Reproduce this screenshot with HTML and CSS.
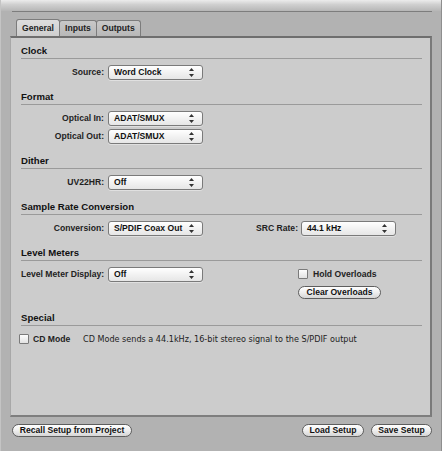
FILE: index.html
```html
<!DOCTYPE html>
<html>
<head>
<meta charset="utf-8">
<link rel="stylesheet" href="styles.css">
</head>
<body>
<div class="window">
  <div class="topbar"></div>
  <div class="rule"></div>
  <div class="tabs">
    <div class="tab active">General</div>
    <div class="tab">Inputs</div>
    <div class="tab">Outputs</div>
  </div>
  <div class="panel">
    <div class="section">
      <div class="head">Clock</div>
      <div class="row"><span class="label">Source:</span><span class="popup">Word Clock<svg class="arr" width="5" height="9" viewBox="0 0 5 9"><path d="M2.5 0L5 3H0z M2.5 9L5 6H0z"/></svg></span></div>
    </div>
    <div class="section">
      <div class="head">Format</div>
      <div class="row"><span class="label">Optical In:</span><span class="popup">ADAT/SMUX<svg class="arr" width="5" height="9" viewBox="0 0 5 9"><path d="M2.5 0L5 3H0z M2.5 9L5 6H0z"/></svg></span></div>
      <div class="row"><span class="label">Optical Out:</span><span class="popup">ADAT/SMUX<svg class="arr" width="5" height="9" viewBox="0 0 5 9"><path d="M2.5 0L5 3H0z M2.5 9L5 6H0z"/></svg></span></div>
    </div>
    <div class="section">
      <div class="head">Dither</div>
      <div class="row"><span class="label">UV22HR:</span><span class="popup">Off<svg class="arr" width="5" height="9" viewBox="0 0 5 9"><path d="M2.5 0L5 3H0z M2.5 9L5 6H0z"/></svg></span></div>
    </div>
    <div class="section">
      <div class="head">Sample Rate Conversion</div>
      <div class="row">
        <span class="label">Conversion:</span><span class="popup">S/PDIF Coax Out<svg class="arr" width="5" height="9" viewBox="0 0 5 9"><path d="M2.5 0L5 3H0z M2.5 9L5 6H0z"/></svg></span>
        <span class="label2">SRC Rate:</span><span class="popup">44.1 kHz<svg class="arr" width="5" height="9" viewBox="0 0 5 9"><path d="M2.5 0L5 3H0z M2.5 9L5 6H0z"/></svg></span>
      </div>
    </div>
    <div class="section">
      <div class="head">Level Meters</div>
      <div class="row">
        <span class="label">Level Meter Display:</span><span class="popup">Off<svg class="arr" width="5" height="9" viewBox="0 0 5 9"><path d="M2.5 0L5 3H0z M2.5 9L5 6H0z"/></svg></span>
        <span class="right"><span class="check"></span><span class="clabel">Hold Overloads</span></span>
      </div>
      <div class="row tall"><span class="right"><span class="pill">Clear Overloads</span></span></div>
    </div>
    <div class="section">
      <div class="head">Special</div>
      <div class="row cd">
        <span class="check"></span><span class="clabel">CD Mode</span>
        <span class="desc">CD Mode sends a 44.1kHz, 16-bit stereo signal to the S/PDIF output</span>
      </div>
    </div>
  </div>
  <div class="footer">
    <span class="pill recall">Recall Setup from Project</span>
    <span class="spacer"></span>
    <span class="pill load">Load Setup</span>
    <span class="pill save">Save Setup</span>
  </div>
</div>
</body>
</html>
```
FILE: styles.css
```css
html, body { margin: 0; padding: 0; }
body { font-family: "Liberation Sans", Arial, sans-serif; color: #1a1a1a; }
.window {
  width: 442px; height: 451px; background: #b2b2b2;
  border-right: 1px solid #8e8e8e; position: relative; box-sizing: border-box;
  border-left: 1px solid #c4c4c4;
}
.topbar { height: 11px; background: linear-gradient(#ececec, #d0d0d0 40%, #b6b6b6); }
.rule { height: 1px; background: #7d7d7d; margin: 0 9px 0 11px; }
.tabs { display: flex; margin: 7px 0 0 15px; height: 17px; }
.tab {
  font-size: 8.6px; font-weight: bold; height: 16px; line-height: 15px;
  padding: 0 5px; border: 1px solid #7c7c7c; border-bottom: none;
  border-radius: 3px 3px 0 0; background: linear-gradient(#c8c8c8, #b8b8b8);
  color: #222; box-sizing: border-box; margin-top: 1px;
}
.tab + .tab { margin-left: -1px; }
.tab.active { background: linear-gradient(#dedede, #cecece); height: 17px; margin-top: 0; line-height: 17px; padding: 0 5px; }
.panel {
  margin: 0 9px 0 9px; height: 381px; background: #cccccc; box-sizing: border-box;
  border-top: 2px solid #6e6e6e; border-right: 2px solid #7a7a7a; border-bottom: 2px solid #7e7e7e;
  border-left: 1px solid #a8a8a8;
  padding: 6px 8px 0 10px;
}
.section { margin-bottom: 9px; }
.head {
  font-size: 9.6px; font-weight: bold; height: 14px; line-height: 14px;
  border-bottom: 1px solid #9a9a9a; color: #111; margin-bottom: 4px;
}
.row { display: flex; align-items: center; height: 18px; font-size: 8.6px; font-weight: bold; white-space: nowrap; }
.row.tall { height: 19px; }
.label { width: 83px; text-align: right; margin-right: 4px; color: #222; }
.label2 { width: 95px; text-align: right; margin-right: 3px; color: #222; }
.popup {
  width: 95px; height: 15px; box-sizing: border-box; border: 1px solid #7a7a7a; border-radius: 3px;
  background: linear-gradient(#ffffff, #f2f2f2 50%, #e6e6e6);
  padding-left: 5px; line-height: 13px; position: relative; color: #111;
  box-shadow: 0 1px 0 #e0e0e0;
}
.arr { position: absolute; right: 8px; top: 2px; fill: #333; }
.right { margin-left: auto; width: 124px; display: flex; align-items: center; }
.check {
  width: 10px; height: 10px; box-sizing: border-box; border: 1px solid #7a7a7a; border-radius: 1px;
  background: linear-gradient(#fdfdfd, #e2e2e2); display: inline-block; flex: none;
}
.clabel { margin-left: 5px; color: #222; }
.pill {
  display: inline-block; height: 13px; line-height: 11px; box-sizing: border-box;
  border: 1px solid #5e5e5e; border-radius: 7px; padding: 0 6px; white-space: nowrap;
  background: linear-gradient(#ffffff, #eeeeee 50%, #d6d6d6);
  font-size: 8.6px; font-weight: bold; color: #111; text-align: center;
}
.right .pill { width: 83px; }
.cd { margin-left: -2px; }
.cd .clabel { margin-left: 4px; width: 50px; }
.desc { font-family: "DejaVu Sans", Verdana, sans-serif; font-weight: normal; font-size: 8.1px; color: #222; }
.footer { display: flex; align-items: center; margin: 7px 9px 0 11px; }
.spacer { flex: 1; }
.recall { width: 120px; }
.load { width: 62px; margin-right: 7px; }
.save { width: 61px; }
```
